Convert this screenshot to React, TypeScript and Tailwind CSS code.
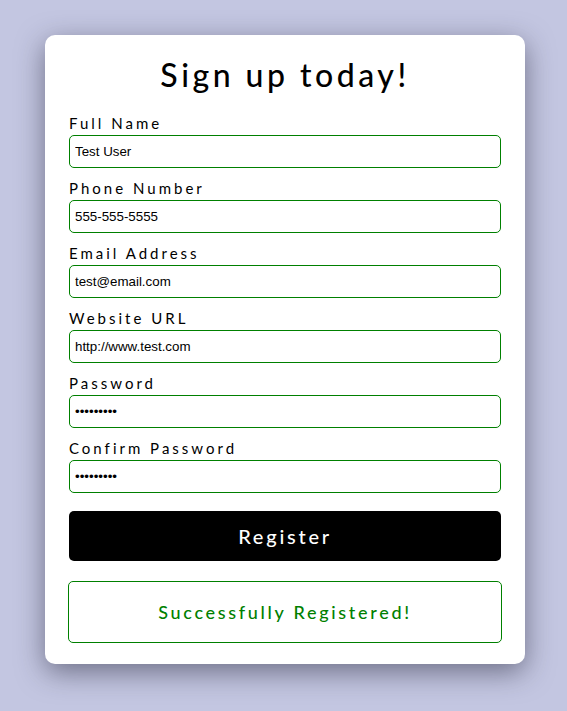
import React from 'react';

const FIELDS = [
  { label: 'Full Name', value: 'Test User', type: 'text' },
  { label: 'Phone Number', value: '555-555-5555', type: 'text' },
  { label: 'Email Address', value: 'test@email.com', type: 'text' },
  { label: 'Website URL', value: 'http://www.test.com', type: 'text' },
  { label: 'Password', value: 'password1', type: 'password' },
  { label: 'Confirm Password', value: 'password1', type: 'password' },
];

export default function App() {
  return (
    <main className="min-h-[711px] bg-[#c3c6e1] pt-[35px] font-['Lato',sans-serif]">
      <div className="ml-[45px] w-[480px] rounded-[10px] bg-white px-6 pt-[20px] pb-[21px] shadow-[0_8px_28px_rgba(40,40,60,0.55)]">
        <h1 className="mb-[18px] text-center text-[32px] font-medium leading-[40px] tracking-[3.5px] text-black">
          Sign up today!
        </h1>

        <form className="flex flex-col gap-[10px]" onSubmit={(e) => e.preventDefault()}>
          {FIELDS.map((f) => (
            <label key={f.label} className="flex flex-col">
              <span className="mb-[2px] text-[15px] leading-[20px] tracking-[3px] text-black">{f.label}</span>
              <input
                readOnly
                type={f.type}
                value={f.value}
                className="h-[33px] w-full rounded-[5px] border border-[#008000] px-[5px] font-['Liberation_Sans',sans-serif] text-[13.33px] text-black outline-none"
              />
            </label>
          ))}

          <button
            type="submit"
            className="mt-[8px] h-[50px] w-full rounded-[5px] bg-black text-[20px] font-medium tracking-[2.75px] text-white"
          >
            Register
          </button>
        </form>

        <div className="mx-[-1px] mt-[20px] flex h-[62px] items-center justify-center rounded-[5px] border border-[#008000] text-[18px] font-medium tracking-[2.7px] text-[#008000]">
          Successfully Registered!
        </div>
      </div>
    </main>
  );
}
